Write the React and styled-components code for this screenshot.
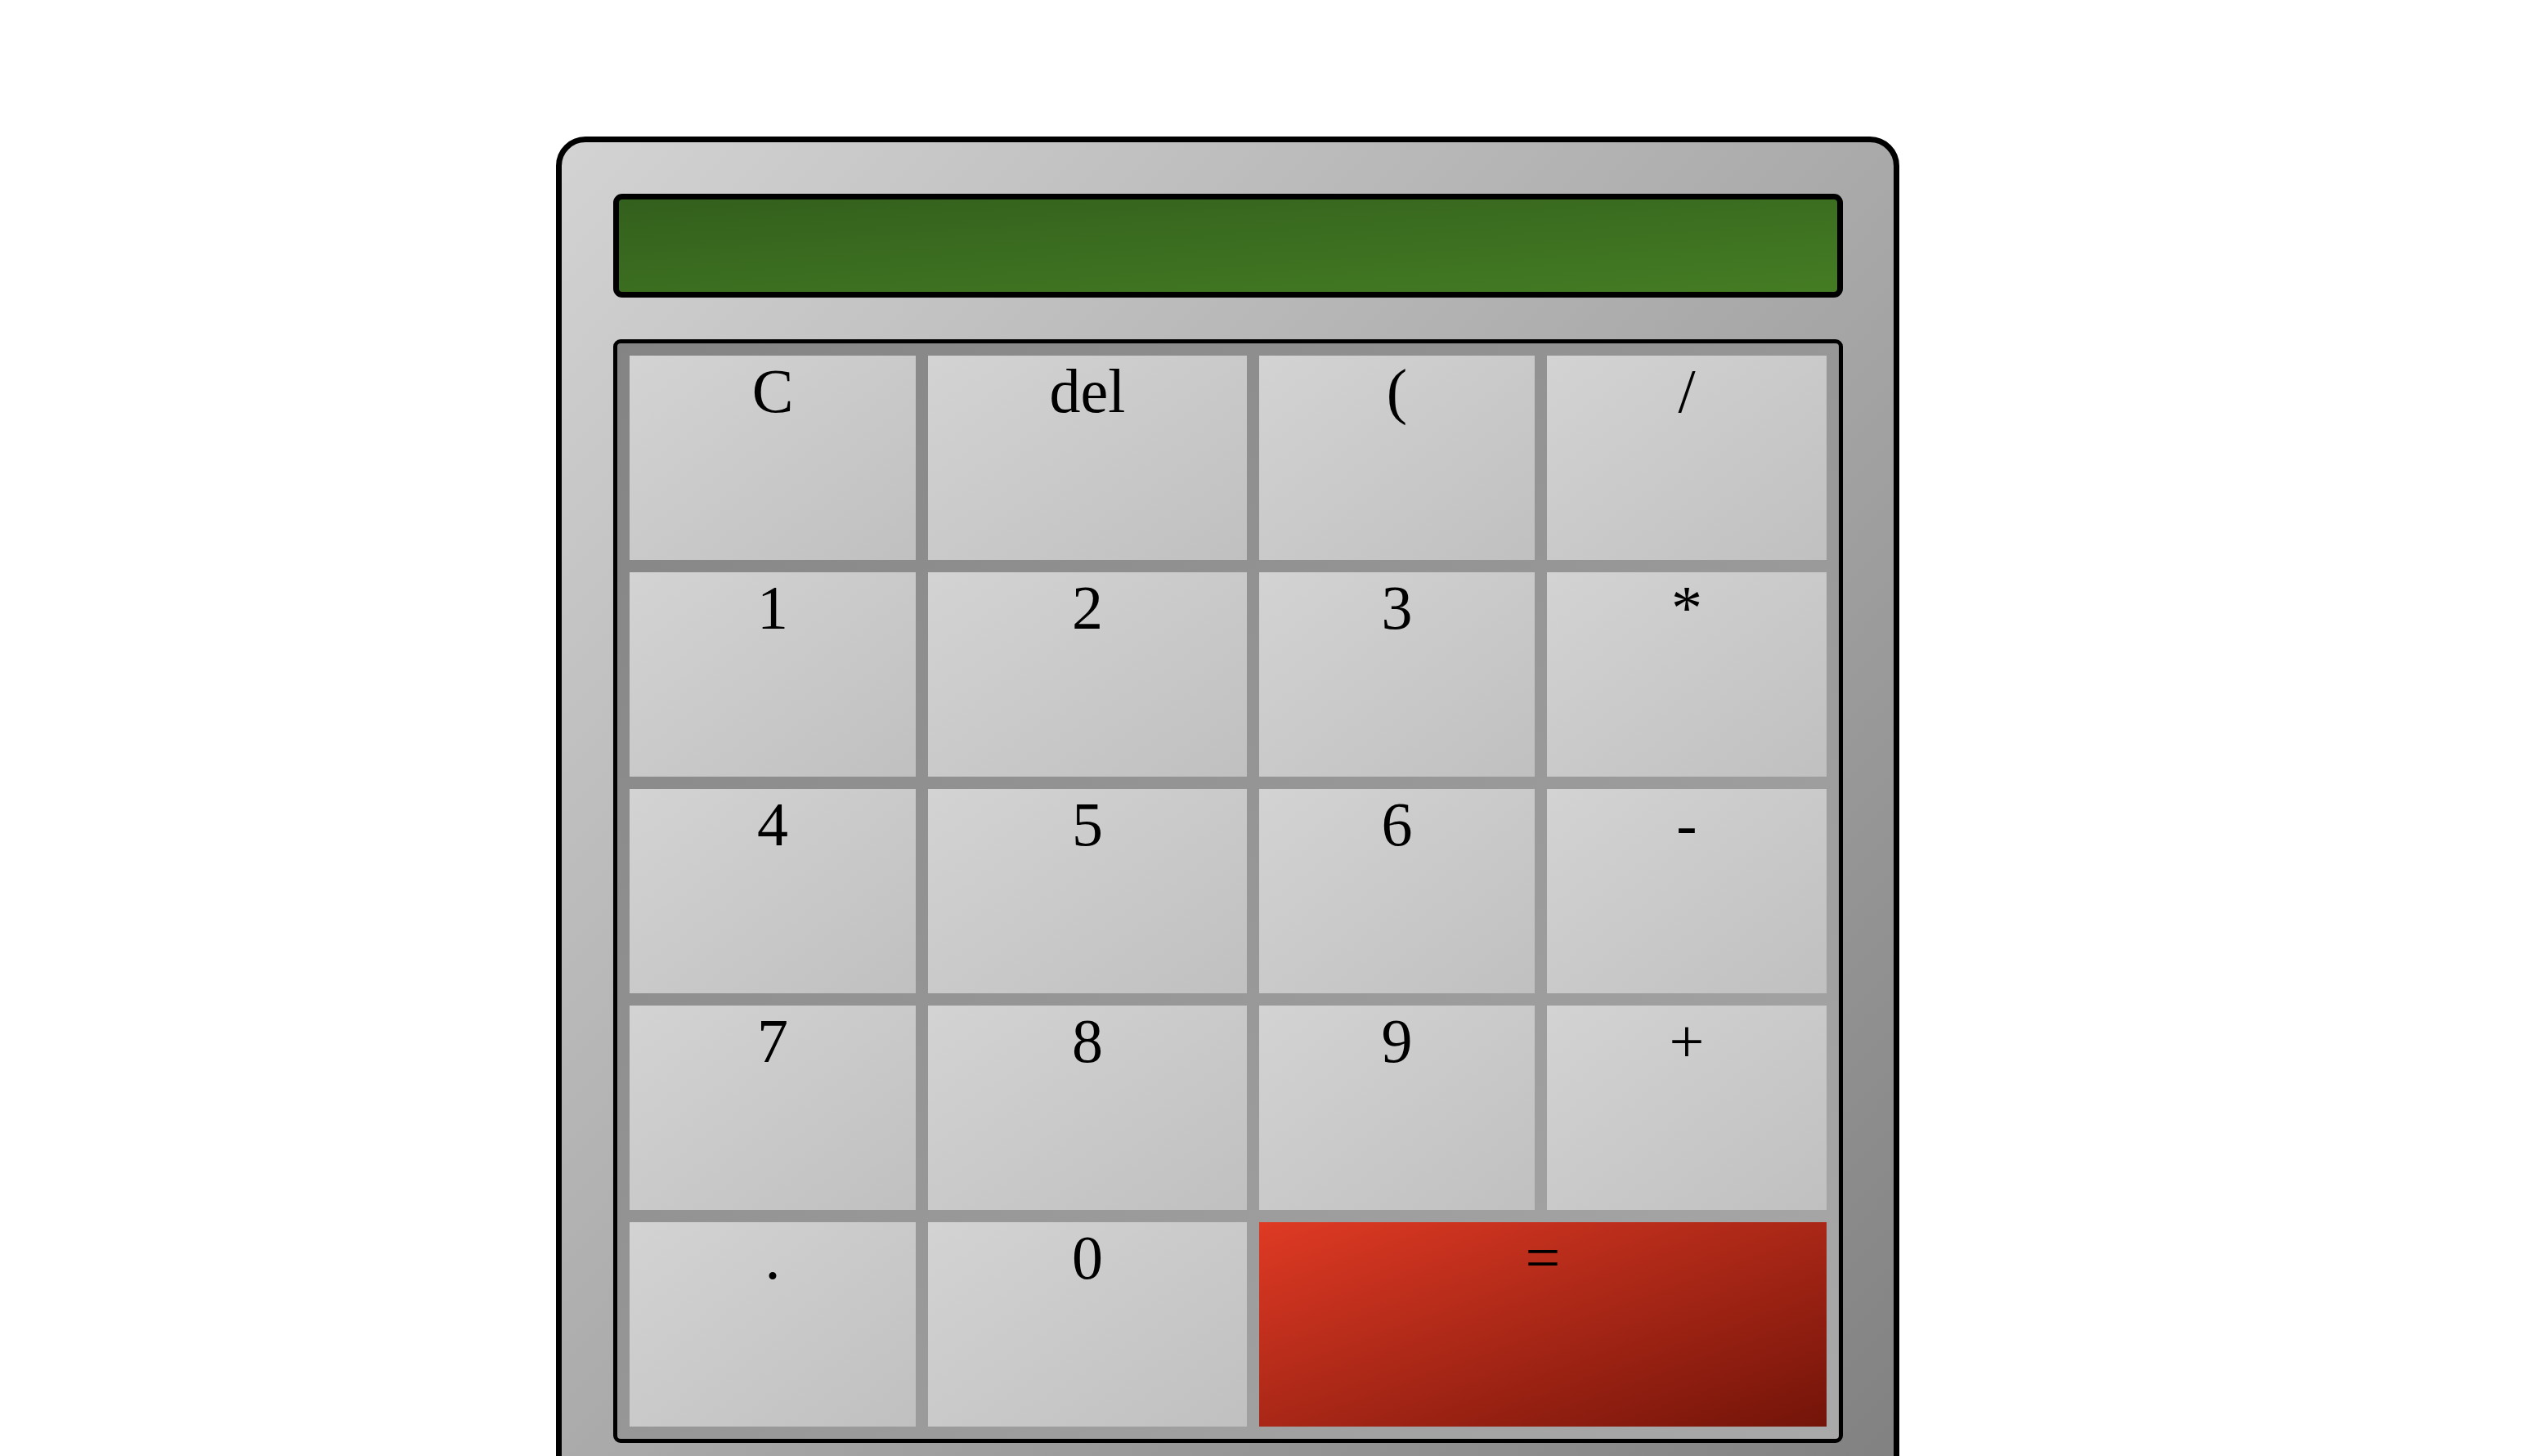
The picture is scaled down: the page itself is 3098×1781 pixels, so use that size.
import React from 'react';
import styled, { createGlobalStyle } from 'styled-components';

const GlobalStyle = createGlobalStyle`
	html, body {
		margin: 0;
		padding: 0;
		background: #ffffff;
		font-family: "Liberation Serif", "Times New Roman", serif;
	}
`

const Page = styled.div`
	padding: 167px 0 0 680px;
`

const Body = styled.div`
	width: 1643px;
	box-sizing: border-box;
	border: 7px solid #000;
	border-radius: 36px;
	padding: 63px 62px 70px 63px;
	background: linear-gradient(to bottom right, #d3d3d3, #808080);
	display: flex;
	flex-direction: column;
	gap: 51px;
`

const Screen = styled.div`
	height: 127px;
	box-sizing: border-box;
	border: 7px solid #000;
	border-radius: 11px;
	background: linear-gradient(to bottom right, #33601d, #447c23);
`

const Keypad = styled.div`
	box-sizing: border-box;
	border: 5px solid #000;
	border-radius: 9px;
	padding: 15px;
	background: linear-gradient(to bottom right, #848484, #a9a9a9);
	display: grid;
	grid-template-columns: 350px 390px 337px 342px;
	grid-auto-rows: 250px;
	gap: 15px;
`

const Key = styled.button`
	border: none;
	margin: 0;
	padding: 0;
	display: flex;
	justify-content: center;
	align-items: flex-start;
	font-family: "Liberation Serif", "Times New Roman", serif;
	font-size: 76px;
	line-height: normal;
	color: #000;
	grid-column: span ${p => p.span || 1};
	background: ${p => p.accent
		? 'linear-gradient(to bottom right, #df3a24, #731409)'
		: 'linear-gradient(to bottom right, #d3d3d3, #c0c0c0)'};
`

const keys = [
	'C', 'del', '(', '/',
	'1', '2', '3', '*',
	'4', '5', '6', '-',
	'7', '8', '9', '+',
	'.', '0',
];

const App = () => {
	return (
		<Page>
			<GlobalStyle />
			<Body>
				<Screen />
				<Keypad>
					{keys.map((k, i) => (
						<Key key={i}>{k}</Key>
					))}
					<Key span={2} accent>=</Key>
				</Keypad>
			</Body>
		</Page>
	);
}

export default App;
